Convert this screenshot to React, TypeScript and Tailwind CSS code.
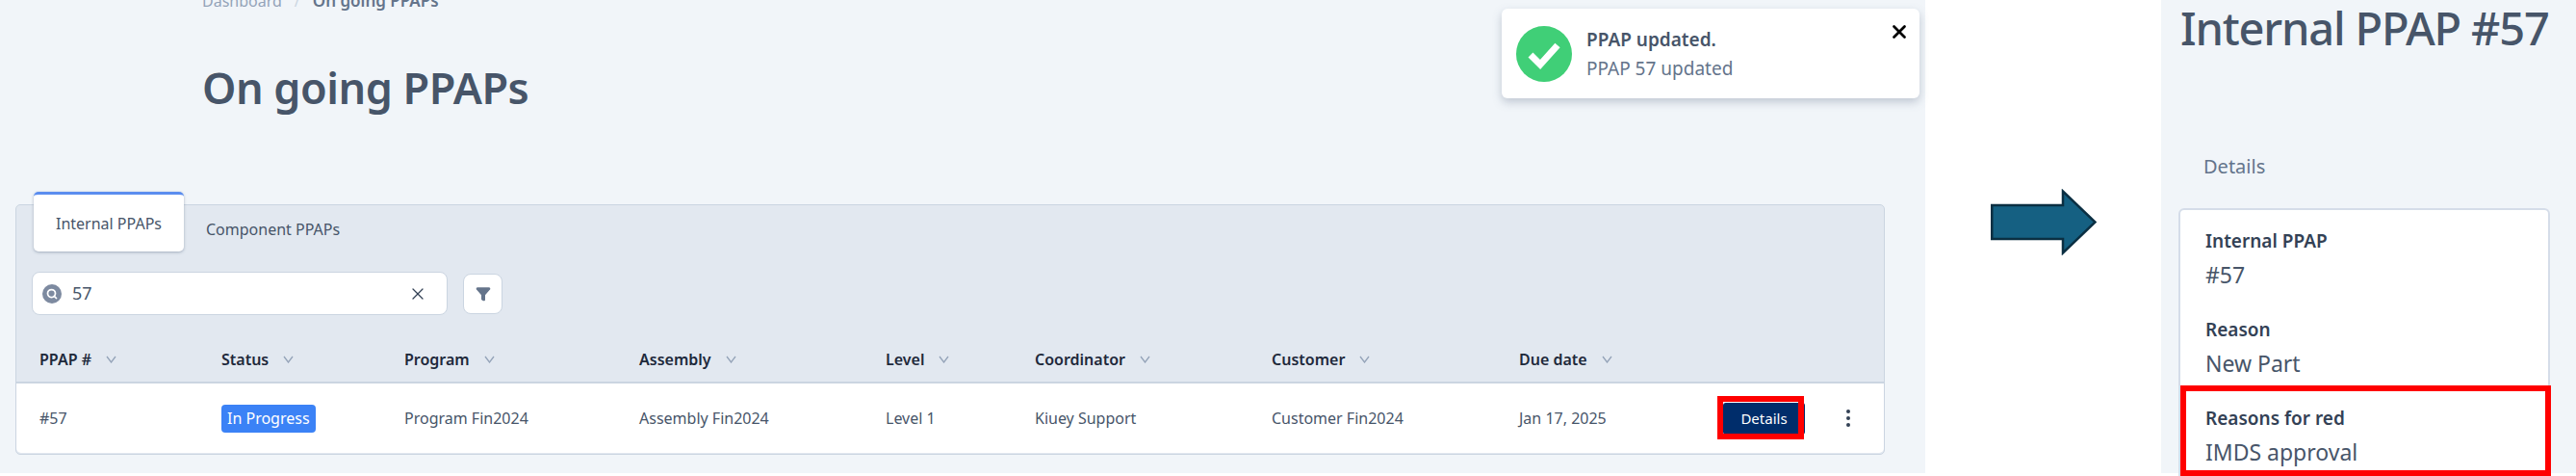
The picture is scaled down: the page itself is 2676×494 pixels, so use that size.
import { Filter, Search, X } from 'lucide-react';

const columns = ['PPAP #', 'Status', 'Program', 'Assembly', 'Level', 'Coordinator', 'Customer', 'Due date'];
const gridCols = 'grid-cols-[189px_190px_244px_256px_155px_246px_257px_1fr]';

function ArrowShape() {
  return (
    <svg width="110" height="69" viewBox="0 0 110 69">
      <path d="M1.25 17H75V2.5L108.5 34.5L75 66.5V52H1.25Z" fill="#156082" stroke="#0b2f42" strokeWidth="2.5" />
    </svg>
  );
}

function SortChevron() {
  return (
    <svg width="11" height="8" viewBox="0 0 11 8" className="shrink-0">
      <path d="M1 1L5.5 7L10 1" fill="none" stroke="#94a3b8" strokeWidth="1.3" />
    </svg>
  );
}

function Field({ label, value }: { label: string; value: string }) {
  return (
    <div className="h-[92px]">
      <div className="text-[19px] leading-[26px] font-semibold text-[#334155]">{label}</div>
      <div className="mt-[9px] text-[23px] leading-[26px] text-[#475569]">{value}</div>
    </div>
  );
}

export default function App() {
  return (
    <div className="relative flex h-[494px] w-[2676px] overflow-hidden bg-white font-['Noto_Sans',sans-serif]">
      {/* list page */}
      <div className="relative h-[491px] w-[2000px] shrink-0 bg-[#f1f5f9]">
        <div className="-mt-[13px] flex h-[28px] items-center pl-[210px] text-[16px] text-[#64748b]">
          <span className="text-[#94a3b8]">Dashboard</span>
          <span className="mx-[13px] text-[#cbd5e1]">/</span>
          <span className="text-[17px] font-semibold">On going PPAPs</span>
        </div>
        <h1 className="mt-[46px] pl-[210px] text-[45px] leading-[60px] font-semibold tracking-[-0.5px] text-[#475569]">On going PPAPs</h1>

        <div className="mt-[91px] ml-[16px] h-[260px] w-[1942px] rounded-[5px] border border-[#cbd5e1] bg-[#e2e8f0]">
          {/* tabs */}
          <div className="-mt-[14px] flex pl-[18px]">
            <div className="flex h-[62px] w-[156px] items-center justify-center rounded-[5px] border-t-[3px] border-[#5b8def] bg-white text-[16px] text-[#475569] shadow-[0_1px_3px_rgba(100,116,139,0.5)]">
              Internal PPAPs
            </div>
            <div className="mt-[15px] flex h-[48px] items-center pl-[23px] text-[16px] text-[#475569]">Component PPAPs</div>
          </div>

          {/* search */}
          <div className="mt-[20px] flex items-center pl-[16px]">
            <div className="flex h-[45px] w-[432px] items-center rounded-[8px] border border-[#cbd5e1] bg-white pl-[10px] pr-[20px]">
              <span className="flex h-[20px] w-[20px] items-center justify-center rounded-full bg-[#7d8aa0]">
                <Search size={12} strokeWidth={3.5} className="text-white" />
              </span>
              <span className="ml-[11px] flex-1 text-[18px] text-[#475569]">57</span>
              <X size={20} strokeWidth={1.5} className="text-[#334155]" />
            </div>
            <div className="ml-[16px] flex h-[42px] w-[41px] items-center justify-center rounded-[8px] border border-[#cbd5e1] bg-white">
              <Filter size={16} fill="#64748b" className="text-[#64748b]" />
            </div>
          </div>

          {/* table */}
          <div className={`mt-[23px] grid h-[48px] items-center border-b-2 border-[#cbd5e1] pl-[24px] ${gridCols}`}>
            {columns.map((col) => (
              <div key={col} className="flex items-center gap-[15px] text-[16px] font-semibold text-[#1e293b]">
                {col}
                <SortChevron />
              </div>
            ))}
          </div>
          <div className={`grid h-[72px] items-center rounded-b-[5px] bg-white pl-[24px] text-[16px] text-[#475569] ${gridCols}`}>
            <div>#57</div>
            <div>
              <span className="inline-flex h-[29px] items-center rounded-[4px] bg-[#3b82f6] px-[6px] text-[16px] text-white">In Progress</span>
            </div>
            <div>Program Fin2024</div>
            <div>Assembly Fin2024</div>
            <div>Level 1</div>
            <div>Kiuey Support</div>
            <div>Customer Fin2024</div>
            <div className="flex items-center">
              <span className="w-[212px]">Jan 17, 2025</span>
              <button className="flex h-[33px] w-[85px] items-center justify-center rounded-[3px] bg-[#002d6b] text-[15px] text-white">Details</button>
              <span className="ml-[43px] flex flex-col gap-[3px]">
                <span className="h-[4px] w-[4px] rounded-full bg-[#334155]" />
                <span className="h-[4px] w-[4px] rounded-full bg-[#334155]" />
                <span className="h-[4px] w-[4px] rounded-full bg-[#334155]" />
              </span>
            </div>
          </div>
        </div>

        {/* toast */}
        <div className="absolute left-[1560px] top-[9px] flex h-[93px] w-[434px] items-center rounded-[6px] bg-white pl-[15px] shadow-[0_4px_10px_rgba(100,116,139,0.35)]">
          <svg width="58" height="58" viewBox="0 0 58 58" className="shrink-0">
            <circle cx="29" cy="29" r="29" fill="#4ade80" />
            <circle cx="29" cy="29" r="29" fill="#22a55a" fillOpacity="0.25" />
            <path d="M15 30L25 40L43 20" fill="none" stroke="white" strokeWidth="7" />
          </svg>
          <div className="ml-[15px] text-[19px] leading-[30px] text-[#64748b]">
            <div className="font-semibold text-[#475569]">PPAP updated.</div>
            <div>PPAP 57 updated</div>
          </div>
          <X size={22} strokeWidth={3} className="absolute right-[10px] top-[13px] text-black" />
        </div>

        {/* red highlight round the button */}
        <div className="absolute left-[1784px] top-[411px] h-[45px] w-[90px] border-[6px] border-[#ff0000]" />
      </div>

      <div className="flex h-[462px] w-[245px] shrink-0 items-end pb-[197px] pl-[68px]">
        <ArrowShape />
      </div>

      {/* details page */}
      <div className="relative h-[491px] flex-1 bg-[#f1f5f9]">
        <h1 className="mt-[-4px] pl-[20px] text-[47px] leading-[66px] font-medium tracking-[-1.2px] whitespace-nowrap text-[#475569]">Internal PPAP #57</h1>
        <div className="mt-[97px] pl-[44px] text-[20px] leading-[28px] text-[#64748b]">Details</div>
        <div className="mt-[29px] ml-[18px] h-[290px] w-[386px] rounded-t-[6px] border-2 border-[#d5dde9] bg-white pt-[19px] pl-[26px]">
          <Field label="Internal PPAP" value="#57" />
          <Field label="Reason" value="New Part" />
          <Field label="Reasons for red" value="IMDS approval" />
        </div>
        <div className="absolute left-[20px] top-[400px] h-[94px] w-[385px] border-[6px] border-[#ff0000]" />
      </div>
    </div>
  );
}
